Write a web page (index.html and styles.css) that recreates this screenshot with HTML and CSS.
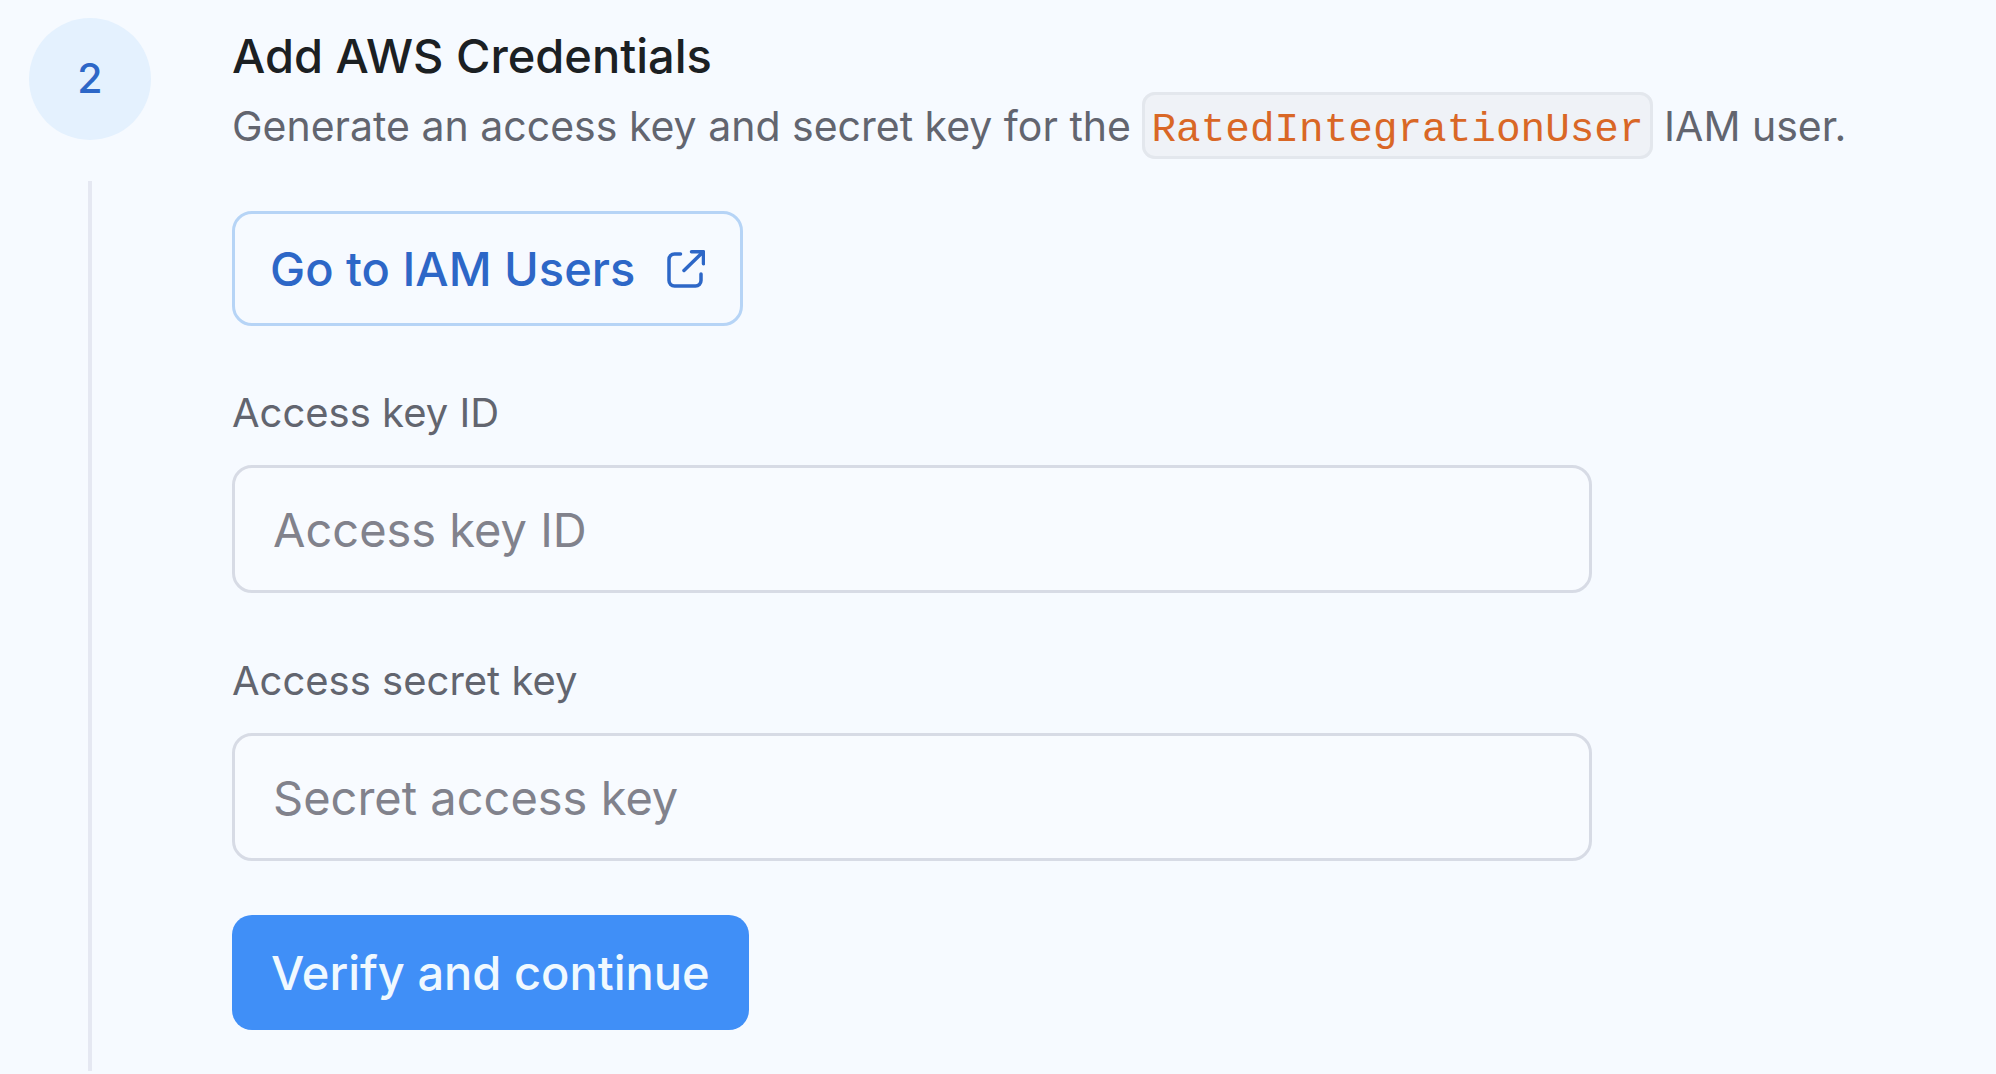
FILE: index.html
```html
<!DOCTYPE html>
<html lang="en">
<head>
<meta charset="utf-8">
<meta name="viewport" content="width=device-width, initial-scale=1">
<title>Add AWS Credentials</title>
<link rel="stylesheet" href="styles.css">
</head>
<body>
<main class="step">
  <div class="rail">
    <span class="step-number">2</span>
    <span class="step-line"></span>
  </div>
  <section class="content">
    <h1 class="title">Add AWS Credentials</h1>
    <p class="description">Generate an access key and secret key for the <code class="code">RatedIntegrationUser</code> IAM user.</p>
    <a class="button button-outline" href="#iam-users">Go to IAM Users
      <svg class="icon" viewBox="0 0 38 38" fill="none" stroke="currentColor" stroke-width="3.5" stroke-linecap="round" stroke-linejoin="round" aria-hidden="true">
        <path d="M13.500 4H7.500a5.500 5.500 0 0 0-5.500 5.500v21a5.500 5.500 0 0 0 5.500 5.500h21a5.500 5.500 0 0 0 5.500-5.500v-6.500M24.500 1.800h12v12M36 2L17 20.500"/>
      </svg>
    </a>
    <form class="form">
      <div class="field">
        <label class="label" for="access-key">Access key ID</label>
        <input class="input" id="access-key" type="text" placeholder="Access key ID">
      </div>
      <div class="field">
        <label class="label" for="secret-key">Access secret key</label>
        <input class="input" id="secret-key" type="text" placeholder="Secret access key">
      </div>
      <button class="button button-primary" type="button">Verify and continue</button>
    </form>
  </section>
</main>
</body>
</html>
```
FILE: styles.css
```css
* { box-sizing: border-box; }
body {
  margin: 0;
  background: #f6faff;
  color: #62656f;
  font-family: Inter, "Liberation Sans", sans-serif;
}
.step {
  display: flex;
  gap: 81px;
  min-height: 100vh;
  padding: 18px 29px 3px;
}
.rail {
  display: flex;
  flex: none;
  flex-direction: column;
  align-items: center;
  gap: 41px;
  width: 122px;
}
.step-number {
  display: flex;
  justify-content: center;
  width: 122px;
  height: 122px;
  border-radius: 50%;
  background: #e4f1fe;
  color: #2d67c7;
  font-size: 41px;
  font-weight: 500;
  line-height: 120px;
}
.step-line {
  flex: 1;
  width: 4px;
  background: #e5e8f2;
}
.content {
  display: flex;
  flex: 1;
  flex-direction: column;
  align-items: flex-start;
  padding-top: 6px;
}
.title {
  margin: 0;
  color: #1b2023;
  font-size: 47px;
  font-weight: 500;
  line-height: 64px;
}
.description {
  margin: 2px 0 49px;
  font-size: 41px;
  line-height: 72px;
}
.code {
  padding: 12px 6px 3px;
  border: 3px solid #e3e7ed;
  border-radius: 13px;
  background: #eff2f7;
  color: #d96726;
  font-family: "Liberation Mono", monospace;
  font-size: 41px;
  line-height: 1;
}
.button {
  display: inline-flex;
  align-items: center;
  gap: 32px;
  height: 115px;
  padding: 0 39px;
  border: 0;
  border-radius: 20px;
  font: 500 47px Inter, "Liberation Sans", sans-serif;
  text-decoration: none;
}
.button-outline {
  padding: 0 35px;
  border: 3px solid #b6d4f6;
  color: #2d67c7;
}
.icon { width: 38px; height: 38px; }
.button-primary { background: #408ff7; color: #f0f9ff; }
.form {
  display: flex;
  flex-direction: column;
  align-items: flex-start;
  gap: 54px;
  width: 100%;
  margin-top: 53px;
}
.field {
  display: flex;
  flex-direction: column;
  gap: 18px;
  width: 100%;
  max-width: 1360px;
}
.label { font-size: 40px; line-height: 68px; }
.input {
  width: 100%;
  height: 128px;
  padding: 0 38px;
  border: 3px solid #d7dbe5;
  border-radius: 20px;
  background: #f8fbff;
  color: #1b2023;
  font: 400 47px Inter, "Liberation Sans", sans-serif;
}
.input::placeholder { color: #81828c; opacity: 1; }
```
